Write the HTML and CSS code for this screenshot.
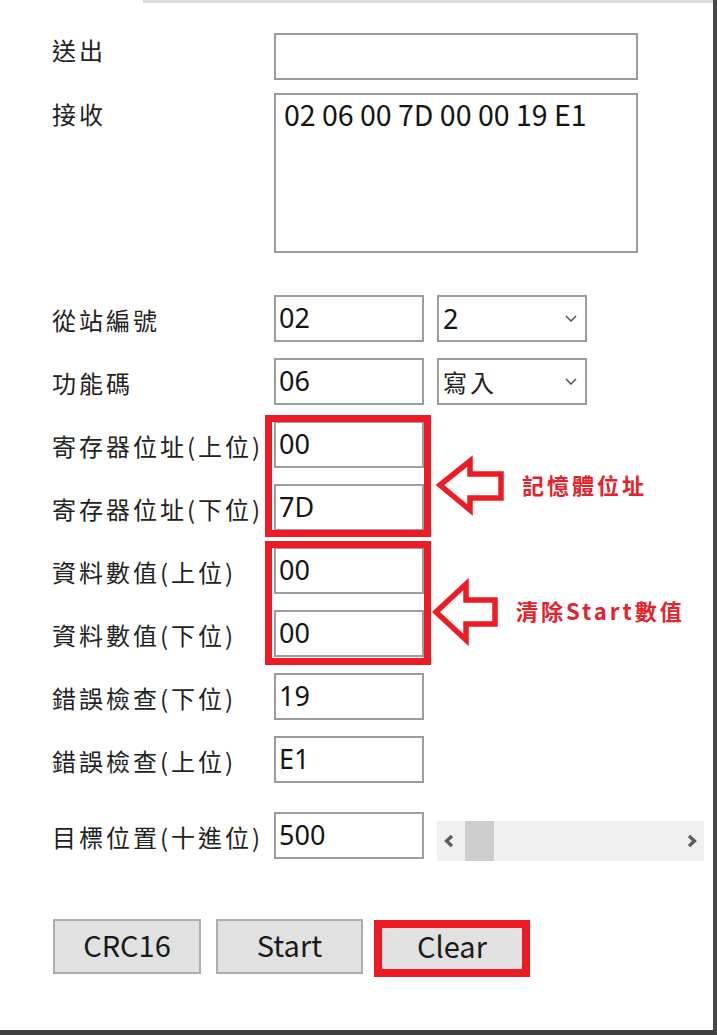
FILE: index.html
```html
<!DOCTYPE html>
<html lang="zh-Hant">
<head>
<meta charset="utf-8">
<title>Modbus</title>
<link rel="stylesheet" href="styles.css">
</head>
<body>
<div class="frame">
  <div class="topline"></div>
  <div class="form">
    <div class="row row-send">
      <div class="lbl lbl-send">送出</div>
      <div class="field wide"></div>
    </div>
    <div class="row row-recv">
      <div class="lbl lbl-recv">接收</div>
      <div class="field area">02 06 00 7D 00 00 19 E1</div>
    </div>
    <div class="rows">
      <div class="row">
        <div class="lbl">從站編號</div>
        <div class="field">02</div>
        <div class="field combo"><span class="num">2</span><svg class="chev" width="12" height="7" viewBox="0 0 12 7"><polyline points="1,1 6,6 11,1" fill="none" stroke="#555" stroke-width="1.5"/></svg></div>
      </div>
      <div class="row">
        <div class="lbl">功能碼</div>
        <div class="field">06</div>
        <div class="field combo"><span class="cjk">寫入</span><svg class="chev" width="12" height="7" viewBox="0 0 12 7"><polyline points="1,1 6,6 11,1" fill="none" stroke="#555" stroke-width="1.5"/></svg></div>
      </div>
      <div class="row">
        <div class="lbl">寄存器位址(上位)</div>
        <div class="field">00</div>
      </div>
      <div class="row">
        <div class="lbl">寄存器位址(下位)</div>
        <div class="field">7D</div>
      </div>
      <div class="row">
        <div class="lbl">資料數值(上位)</div>
        <div class="field">00</div>
      </div>
      <div class="row">
        <div class="lbl">資料數值(下位)</div>
        <div class="field">00</div>
      </div>
      <div class="row">
        <div class="lbl">錯誤檢查(下位)</div>
        <div class="field">19</div>
      </div>
      <div class="row">
        <div class="lbl">錯誤檢查(上位)</div>
        <div class="field">E1</div>
      </div>
    </div>
    <div class="row row-target">
      <div class="lbl">目標位置(十進位)</div>
      <div class="field">500</div>
      <div class="scroll">
        <svg class="sarrow" width="12" height="14" viewBox="0 0 12 14"><polyline points="9,2 3.5,7 9,12" fill="none" stroke="#5a5a5a" stroke-width="3.2"/></svg>
        <div class="thumb"></div>
        <div class="track"></div>
        <svg class="sarrow" width="12" height="14" viewBox="0 0 12 14"><polyline points="3,2 8.5,7 3,12" fill="none" stroke="#5a5a5a" stroke-width="3.2"/></svg>
      </div>
    </div>
  </div>
  <div class="buttons">
    <div class="btn btn-crc">CRC16</div>
    <div class="btn btn-start">Start</div>
    <div class="btn btn-clear">Clear</div>
  </div>

  <div class="mark mark-a"></div>
  <div class="mark mark-b"></div>
  <div class="mark mark-c"></div>
  <svg class="arrows" width="90" height="200" viewBox="425 450 90 200">
    <polygon points="440,485 470,461 470,474 501,474 501,498 470,498 470,510" fill="none" stroke="#ed1c24" stroke-width="5.5" stroke-linejoin="miter"/>
    <polygon points="436,612 466,584 466,600 495,600 495,624 466,624 466,640" fill="none" stroke="#ed1c24" stroke-width="5.5" stroke-linejoin="miter"/>
  </svg>
  <div class="note note-a">記憶體位址</div>
  <div class="note note-b">清除Start數值</div>
</div>
</body>
</html>
```

FILE: styles.css
```css
html, body {
  margin: 0;
  padding: 0;
  background: #ffffff;
}

.frame {
  position: relative;
  width: 713px;
  height: 1030px;
  background: #ffffff;
  border-right: 4px solid #474747;
  border-bottom: 5px solid #3f3f3f;
  overflow: hidden;
}

.topline {
  height: 3px;
  margin-left: 143px;
  background: #dcdcdc;
}

.form {
  display: flex;
  flex-direction: column;
  padding: 30px 0 0 52px;
}

.row {
  display: flex;
  align-items: flex-start;
}

.rows {
  display: flex;
  flex-direction: column;
  gap: 16px;
  margin-top: 42px;
}

.row-recv {
  margin-top: 13px;
}

.row-target {
  margin-top: 29px;
}

.lbl {
  box-sizing: border-box;
  width: 222px;
  height: 47px;
  flex: none;
  font-family: "Noto Sans CJK TC", "Noto Sans", sans-serif;
  font-size: 24px;
  letter-spacing: 3px;
  line-height: 45px;
  padding-top: 2px;
  color: #222222;
  white-space: nowrap;
}

.lbl-send {
  line-height: 34px;
  padding-top: 0;
}

.lbl-recv {
  line-height: 42px;
  padding-top: 0;
}

.field {
  box-sizing: border-box;
  width: 150px;
  height: 47px;
  border: 2px solid #9c9c9c;
  background: #ffffff;
  font-family: "Noto Sans", sans-serif;
  font-size: 27px;
  line-height: 42px;
  padding-left: 3px;
  color: #141414;
  flex: none;
}

.wide {
  width: 364px;
}

.area {
  width: 364px;
  height: 160px;
  font-family: "Noto Sans CJK TC", sans-serif;
  font-size: 28.5px;
  line-height: 37px;
  padding: 0 8px;
}

.combo {
  margin-left: 13px;
  display: flex;
  align-items: center;
  justify-content: space-between;
  padding: 0 8px 0 4px;
}

.combo .num {
  line-height: 42px;
}

.combo .cjk {
  font-family: "Noto Sans CJK TC", sans-serif;
  font-size: 24px;
  letter-spacing: 3px;
  color: #222222;
}

.chev {
  flex: none;
}

.scroll {
  margin-left: 13px;
  margin-top: 9px;
  width: 267px;
  height: 40px;
  background: #f0f0f0;
  display: flex;
  align-items: center;
}

.sarrow {
  flex: none;
  margin: 0 6px;
}

.thumb {
  width: 29px;
  height: 40px;
  background: #cdcdcd;
  margin-left: 4px;
}

.track {
  flex: 1;
}

.buttons {
  display: flex;
  align-items: flex-start;
  margin-top: 58px;
  padding-left: 53px;
}

.btn {
  box-sizing: border-box;
  height: 55px;
  background: #e1e1e1;
  border: 2px solid #adadad;
  font-family: "Noto Sans CJK TC", sans-serif;
  font-size: 29px;
  line-height: 46px;
  text-align: center;
  color: #1a1a1a;
}

.btn-crc {
  width: 148px;
}

.btn-start {
  width: 147px;
  margin-left: 15px;
}

.btn-clear {
  width: 150px;
  margin-left: 14px;
  margin-top: 1px;
  border-color: #0078d7;
}

.mark {
  position: absolute;
  box-sizing: border-box;
  border: 7px solid #ed1c24;
}

.mark-a {
  left: 265px;
  top: 415px;
  width: 166px;
  height: 122px;
}

.mark-b {
  left: 265px;
  top: 541px;
  width: 166px;
  height: 124px;
}

.mark-c {
  left: 374px;
  top: 920px;
  width: 156px;
  height: 57px;
  border-width: 8px;
}

.arrows {
  position: absolute;
  left: 425px;
  top: 450px;
}

.note {
  position: absolute;
  font-family: "Noto Sans CJK TC", sans-serif;
  font-weight: bold;
  font-size: 22px;
  letter-spacing: 3px;
  line-height: 30px;
  color: #e8202a;
  white-space: nowrap;
}

.note-a {
  left: 522px;
  top: 469px;
}

.note-b {
  left: 516px;
  top: 595px;
}
```
